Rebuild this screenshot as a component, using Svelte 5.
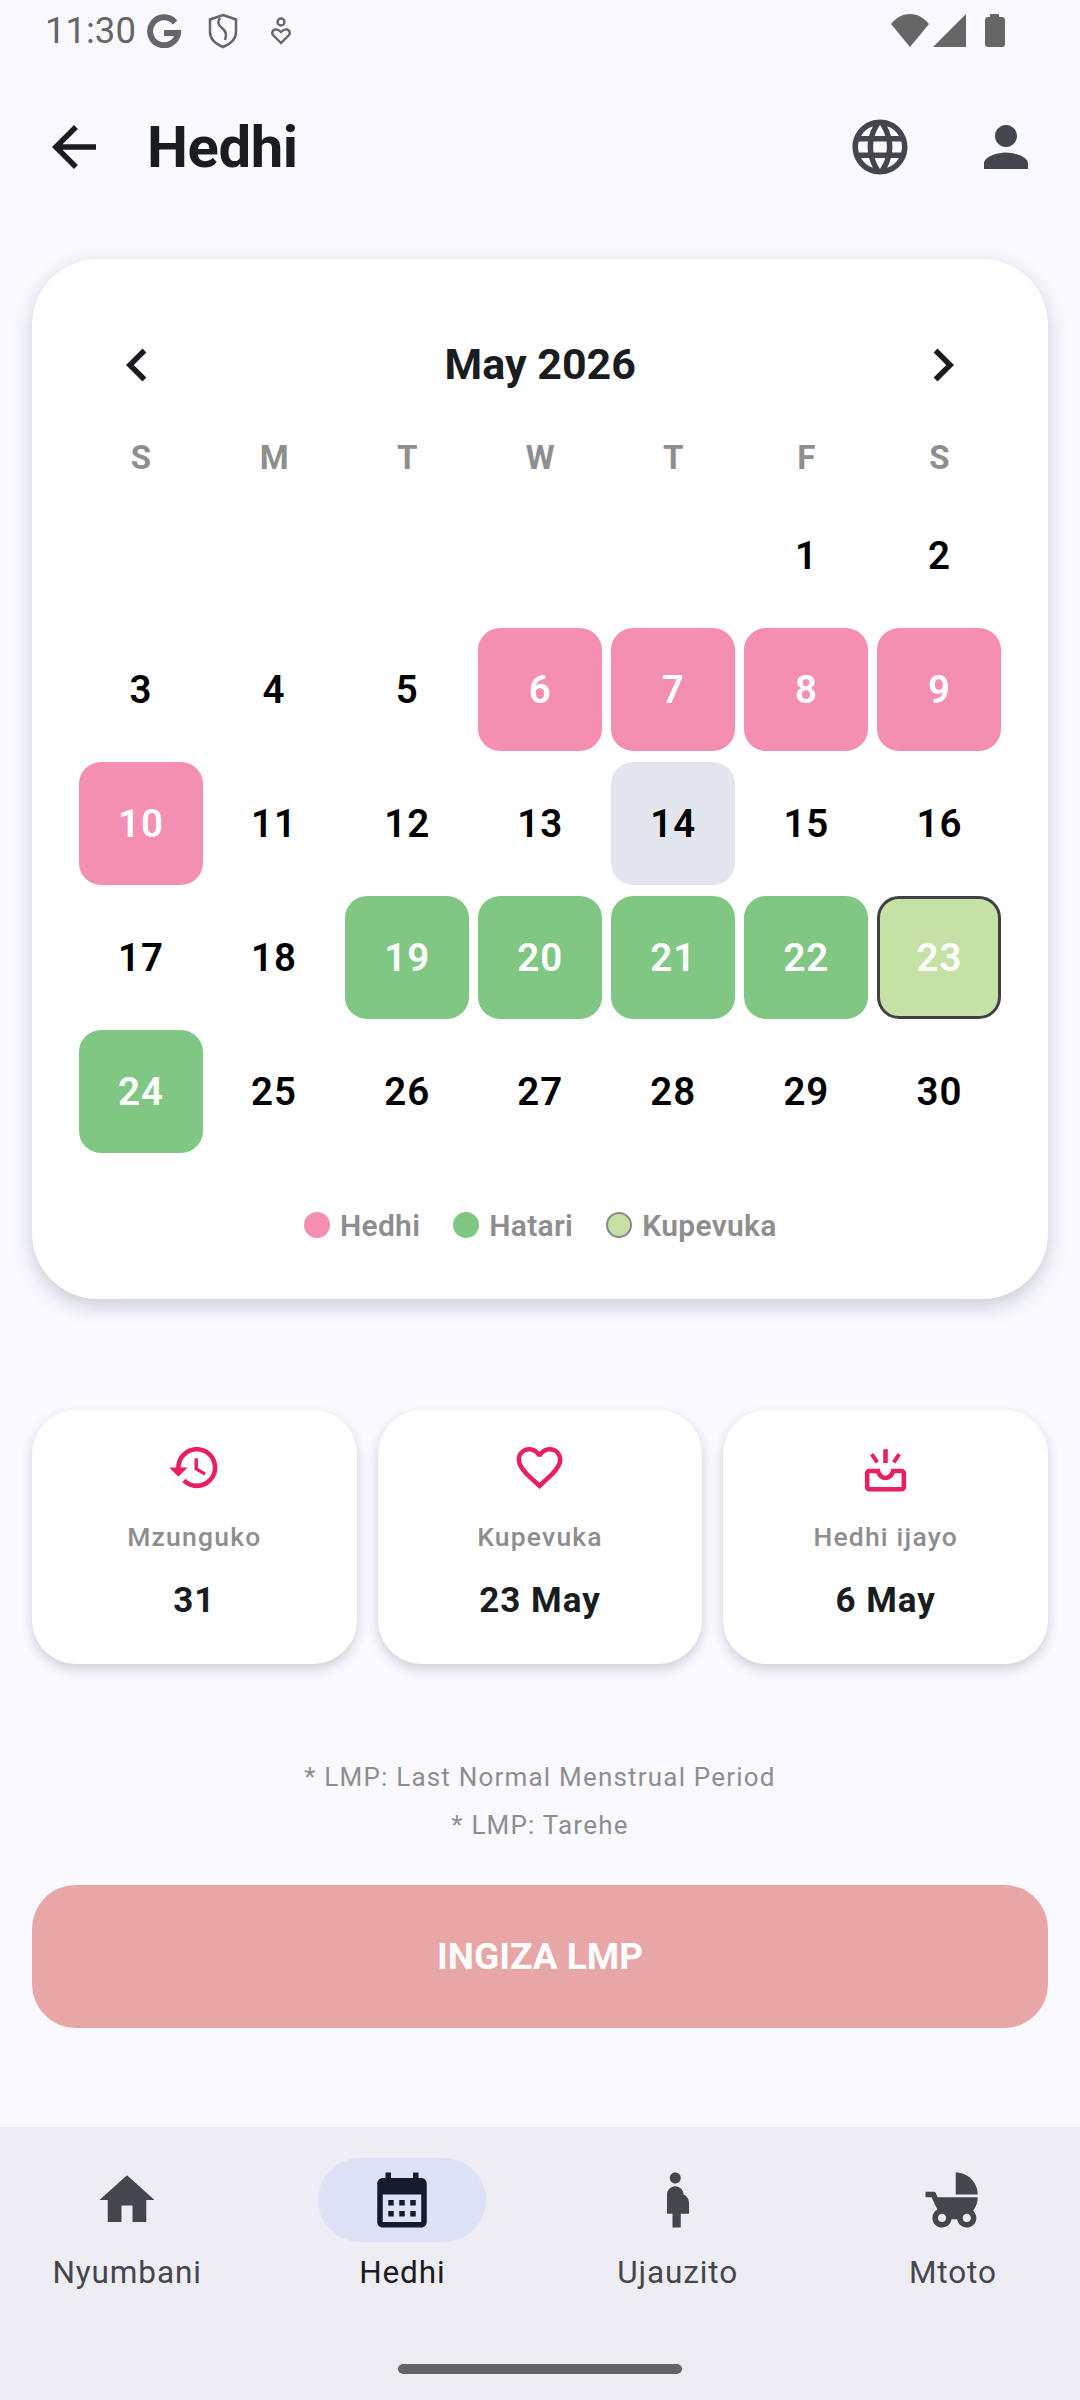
<script lang="ts">
  // May 2026 starts on a Friday
  const weekdays = ['S', 'M', 'T', 'W', 'T', 'F', 'S']
  const kinds: Record<number, string> = {
    6: 'period', 7: 'period', 8: 'period', 9: 'period', 10: 'period',
    14: 'today',
    19: 'fertile', 20: 'fertile', 21: 'fertile', 22: 'fertile', 24: 'fertile',
    23: 'ovulation'
  }
  const days = Array.from({ length: 30 }, (_, i) => i + 1)
  const blanks = Array.from({ length: 5 })

  const legend = [
    { label: 'Hedhi', kind: 'period' },
    { label: 'Hatari', kind: 'fertile' },
    { label: 'Kupevuka', kind: 'ovulation' }
  ]

  const stats = [
    {
      label: 'Mzunguko', value: '31', vb: '0 0 24 24',
      d: 'M13 3c-4.97 0-9 4.03-9 9H1l3.89 3.89.07.14L9 12H6c0-3.87 3.13-7 7-7s7 3.13 7 7-3.13 7-7 7c-1.93 0-3.68-.79-4.94-2.06l-1.42 1.42C8.27 19.99 10.51 21 13 21c4.97 0 9-4.03 9-9s-4.03-9-9-9zm-1 5v5l4.28 2.54.72-1.21-3.5-2.08V8H12z'
    },
    {
      label: 'Kupevuka', value: '23 May', vb: '0 0 24 24',
      d: 'M16.5 3c-1.74 0-3.41.81-4.5 2.09C10.91 3.81 9.24 3 7.5 3 4.42 3 2 5.42 2 8.5c0 3.78 3.4 6.86 8.55 11.54L12 21.35l1.45-1.32C18.6 15.36 22 12.28 22 8.5 22 5.42 19.58 3 16.5 3zm-4.4 15.55l-.1.1-.1-.1C7.14 14.24 4 11.39 4 8.5 4 6.5 5.5 5 7.5 5c1.54 0 3.04.99 3.57 2.36h1.87C13.46 5.99 14.96 5 16.5 5c2 0 3.5 1.5 3.5 3.5 0 2.89-3.14 5.74-7.9 10.05z'
    },
    {
      label: 'Hedhi ijayo', value: '6 May', vb: '0 -1.5 24 24',
      d: 'M18.7 5.2l-1.4-1-2.4 3.6 1.4 1zM13 2.5h-2v6h2zM7.7 8.8l1.4-1-2.4-3.6-1.4 1zM19 11h-4.6c0 1.5-1.1 3-2.4 3s-2.4-1.5-2.4-3H5c-1.1 0-2 .9-2 2v6c0 1.1.9 2 2 2h14c1.1 0 2-.9 2-2v-6c0-1.1-.9-2-2-2zm0 8H5v-6h3c.6 1.9 2.2 3 4 3s3.400-1.100 4-3h3z'
    }
  ]

  const tabs = [
    { label: 'Nyumbani', d: 'M10 20v-6h4v6h5v-8h3L12 3 2 12h3v8z' },
    {
      label: 'Hedhi', active: true,
      d: 'M19 4h-1V2h-2v2H8V2H6v2H5c-1.11 0-1.99.9-1.99 2L3 20c0 1.1.89 2 2 2h14c1.1 0 2-.9 2-2V6c0-1.1-.9-2-2-2zm0 16H5V10h14v10zM9 14H7v-2h2v2zm4 0h-2v-2h2v2zm4 0h-2v-2h2v2zm-8 4H7v-2h2v2zm4 0h-2v-2h2v2zm4 0h-2v-2h2v2z'
    },
    {
      label: 'Ujauzito',
      d: 'M9 4c0-1.11.89-2 2-2s2 .89 2 2-.89 2-2 2-2-.89-2-2zm7 9c-.01-1.34-.83-2.51-2-3 0-1.66-1.34-3-3-3s-3 1.34-3 3v7h2v5h3v-5h3v-4z'
    },
    {
      label: 'Mtoto',
      d: 'M13 2v8h8c0-4.420-3.580-8-8-8zm6.320 13.890C20.370 14.540 21 12.840 21 11H6.440l-.95-2H2v2h2.220s1.890 4.070 2.120 4.420c-1.100.59-1.840 1.750-1.840 3.080C4.500 20.430 6.070 22 8 22c1.760 0 3.220-1.300 3.460-3h2.080c.24 1.700 1.700 3 3.460 3 1.930 0 3.500-1.570 3.500-3.500 0-1.040-.46-1.970-1.180-2.610zM8 20c-.83 0-1.500-.67-1.500-1.500S7.170 17 8 17s1.500.67 1.500 1.500S8.830 20 8 20zm9 0c-.83 0-1.500-.67-1.500-1.500s.67-1.500 1.500-1.500 1.500.67 1.500 1.500-.67 1.500-1.500 1.500z'
    }
  ]
</script>

<div class="screen">
  <div class="status">
    <span class="time">11:30</span>
    <svg class="st-g" width="34" height="34" viewBox="0 0 34 34"><path d="M28 8.500A14 14 0 1 0 31 19H17" fill="none" stroke="#666" stroke-width="6"/></svg>
    <svg class="st-shield" width="30" height="36" viewBox="0 0 30 36" fill="none" stroke="#666" stroke-width="2.500"><path d="M15 2l13 4.500V19c0 7-5.500 12-13 15C7.500 31 2 26 2 19V6.500z"/><path d="M12 5c-3 4-2 7 2 10s5 7 3 12"/></svg>
    <svg class="st-care" width="20" height="28" viewBox="0 0 20 28" fill="none" stroke="#666" stroke-width="2.400"><circle cx="10" cy="5" r="3.500"/><path d="M10 26l-8-8c-1.500-2-.5-5 2-5.500 2.500-.5 4.500 1 6 2.500 1.500-1.500 3.500-3 6-2.500 2.500.5 3.500 3.500 2 5.500z"/></svg>
    <span class="status-gap"></span>
    <svg width="40" height="33" viewBox="0 0 40 33"><path d="M20 33L1 10C6 4 12 0 20 0s14 4 19 10z" fill="#666"/></svg>
    <svg class="st-signal" width="33" height="33" viewBox="0 0 33 33"><path d="M33 0v33H0z" fill="#666"/></svg>
    <svg class="st-batt" width="20" height="33" viewBox="0 0 20 33"><path d="M5 0h9v3h3c1.700 0 3 1.300 3 3v24c0 1.700-1.300 3-3 3H3c-1.700 0-3-1.300-3-3V6c0-1.700 1.300-3 3-3h2z" fill="#666"/></svg>
  </div>

  <div class="appbar">
    <svg class="ic back" viewBox="0 0 24 24"><path d="M20 11H7.830l5.590-5.590L12 4l-8 8 8 8 1.410-1.410L7.830 13H20v-2z"/></svg>
    <h1>Hedhi</h1>
    <svg class="ic action" viewBox="0 0 24 24"><path d="M11.990 2C6.470 2 2 6.480 2 12s4.470 10 9.990 10C17.520 22 22 17.520 22 12S17.520 2 11.990 2zm6.930 6h-2.950c-.32-1.250-.78-2.450-1.380-3.560 1.840.63 3.370 1.910 4.330 3.560zM12 4.040c.83 1.200 1.480 2.530 1.910 3.960h-3.820c.43-1.430 1.080-2.760 1.910-3.960zM4.260 14C4.100 13.360 4 12.690 4 12s.1-1.360.26-2h3.380c-.08.66-.14 1.320-.14 2 0 .68.06 1.340.14 2H4.260zm.82 2h2.950c.32 1.250.78 2.450 1.380 3.560-1.840-.63-3.370-1.900-4.330-3.560zm2.950-8H5.080c.96-1.660 2.490-2.930 4.330-3.560C8.810 5.550 8.350 6.750 8.030 8zM12 19.960c-.83-1.200-1.480-2.530-1.910-3.960h3.820c-.43 1.430-1.080 2.760-1.910 3.960zM14.340 14H9.660c-.09-.66-.16-1.320-.16-2 0-.68.07-1.350.16-2h4.680c.09.65.16 1.320.16 2 0 .68-.07 1.340-.16 2zm.25 5.560c.6-1.110 1.060-2.310 1.380-3.560h2.950c-.96 1.650-2.490 2.930-4.330 3.560zM16.360 14c.08-.66.14-1.320.14-2 0-.68-.06-1.340-.14-2h3.380c.16.64.26 1.310.26 2s-.1 1.360-.26 2h-3.380z"/></svg>
    <svg class="ic action person" viewBox="0 0 24 24"><path d="M12 12c2.210 0 4-1.790 4-4s-1.790-4-4-4-4 1.790-4 4 1.790 4 4 4zm0 2c-2.670 0-8 1.340-8 4v2h16v-2c0-2.660-5.330-4-8-4z"/></svg>
  </div>

  <main class="content">
    <section class="calendar">
      <div class="month">
        <svg class="ic chev" viewBox="0 0 24 24"><path d="M15.410 16.590L10.830 12l4.580-4.590L14 6l-6 6 6 6 1.410-1.410z"/></svg>
        <span class="month-name">May 2026</span>
        <svg class="ic chev" viewBox="0 0 24 24"><path d="M8.590 16.590L13.170 12 8.590 7.410 10 6l6 6-6 6-1.410-1.410z"/></svg>
      </div>
      <div class="grid weekdays">
        {#each weekdays as w}
          <span class="weekday">{w}</span>
        {/each}
      </div>
      <div class="grid days">
        {#each blanks as _}
          <span></span>
        {/each}
        {#each days as d}
          <span class="day {kinds[d] ?? ''}">{d}</span>
        {/each}
      </div>
      <div class="legend">
        {#each legend as l}
          <span class="legend-item">
            <span class="dot {l.kind}"></span>
            {l.label}
          </span>
        {/each}
      </div>
    </section>

    <section class="stats">
      {#each stats as s}
        <div class="stat">
          <svg class="stat-ic" viewBox={s.vb}><path d={s.d}/></svg>
          <span class="stat-label">{s.label}</span>
          <span class="stat-value">{s.value}</span>
        </div>
      {/each}
    </section>

    <div class="notes">
      <p>* LMP: Last Normal Menstrual Period</p>
      <p>* LMP: Tarehe</p>
    </div>

    <button class="cta">INGIZA LMP</button>
  </main>

  <nav class="nav">
    <div class="tabs">
      {#each tabs as t}
        <div class="tab" class:active={t.active}>
          <span class="pill">
            <svg class="ic" viewBox="0 0 24 24"><path d={t.d}/></svg>
          </span>
          <span class="tab-label">{t.label}</span>
        </div>
      {/each}
    </div>
    <div class="home-bar"></div>
  </nav>
</div>

<style>
:global(body) { margin: 0; background: #f9f9ff; }
.screen {
  width: 1080px; height: 2400px; display: flex; flex-direction: column; overflow: hidden;
  background: #f9f9ff; font-family: Roboto, "Liberation Sans", sans-serif; color: #191c20;
}
.status { height: 61px; display: flex; align-items: center; padding: 0 75px 0 45px; flex: 0 0 auto; }
.time { font-size: 36.500px; color: #666; line-height: 61px; }
.st-g { margin-left: 11px; }
.st-shield { margin-left: 27px; }
.st-care { margin-left: 33px; }
.status-gap { flex: 1; }
.st-signal { margin-left: 3px; }
.st-batt { margin-left: 19px; }

.ic { width: 66px; height: 66px; flex: 0 0 auto; fill: #44464f; }
.appbar { height: 172px; display: flex; align-items: center; padding: 0 41px; box-sizing: border-box; flex: 0 0 auto; }
.back { fill: #191c20; }
h1 { margin: 0 0 0 40px; font-size: 58px; font-weight: 700; line-height: 66px; flex: 1; letter-spacing: -0.4px; }
.person { margin-left: 60px; }

.content { padding: 26px 32px 0; display: flex; flex-direction: column; }
.calendar {
  background: #fff; border-radius: 66px; padding: 73px 46.500px 55px 47px;
  box-shadow: 0 7px 20px rgba(40, 40, 70, 0.22);
}
.month { display: flex; align-items: center; justify-content: space-between; padding: 0 25px; height: 66px; }
.chev { fill: #191c20; }
.month-name { font-size: 43px; font-weight: 700; padding-bottom: 2px; }
.grid { display: grid; grid-template-columns: repeat(7, 1fr); column-gap: 9px; }
.weekdays { margin-top: 40px; }
.weekday { text-align: center; font-size: 33px; font-weight: 700; line-height: 40px; color: #8e8e8e; }
.days { margin-top: 16px; grid-auto-rows: 123px; row-gap: 11px; }
.day {
  display: flex; align-items: center; justify-content: center; box-sizing: border-box;
  border-radius: 22px; font-size: 38.500px; font-weight: 600; color: #000; letter-spacing: 1px;
}
.day.period { background: #f48fb1; color: #fff; }
.day.fertile { background: #81c784; color: #fff; }
.day.ovulation { background: #c5e1a5; color: #fff; border: 3px solid #424242; }
.day.today { background: #e3e6ef; }

.legend { margin-top: 55px; display: flex; justify-content: center; gap: 33px; height: 34px; padding-bottom: 2px; }
.legend-item { display: flex; align-items: center; gap: 10px; font-size: 30px; font-weight: 600; color: #8e8e8e; letter-spacing: 0.3px; }
.dot { width: 26px; height: 26px; border-radius: 50%; box-sizing: border-box; }
.dot.period { background: #f48fb1; }
.dot.fertile { background: #81c784; }
.dot.ovulation { background: #c5e1a5; border: 2px solid #8a8a8a; }

.stats { margin-top: 111px; display: grid; grid-template-columns: repeat(3, 1fr); gap: 21px; }
.stat {
  background: #fff; border-radius: 44px; padding: 30px 0 41px;
  display: flex; flex-direction: column; align-items: center;
  box-shadow: 0 5px 12px rgba(40, 40, 70, 0.2);
}
.stat-ic { width: 55px; height: 55px; fill: #e91e63; }
.stat-label { margin-top: 24px; font-size: 26.500px; font-weight: 500; line-height: 36px; color: #8e8e8e; letter-spacing: 1.2px; }
.stat-value { margin-top: 24px; font-size: 35px; font-weight: 700; line-height: 44px; letter-spacing: 1px; }

.notes { margin-top: 89px; text-align: center; font-size: 26px; line-height: 48px; color: #8e8e8e; letter-spacing: 1.2px; }
.notes p { margin: 0; }

.cta {
  margin-top: 36px; height: 143px; border: 0; border-radius: 44px; background: #e8a6a6;
  color: #fff; font-family: inherit; font-size: 37px; font-weight: 700;
}

.nav { margin-top: auto; height: 273px; background: #eeedf3; flex: 0 0 auto; padding-top: 31px; box-sizing: border-box; }
.tabs { display: grid; grid-template-columns: repeat(4, 1fr); gap: 55px; padding: 0 17px; }
.tab { display: flex; flex-direction: column; align-items: center; }
.pill { width: 168px; height: 84px; border-radius: 42px; display: flex; align-items: center; justify-content: center; }
.tab.active .pill { background: #dde2f9; }
.tab.active .ic { fill: #141b2c; }
.tab-label { margin-top: 12px; font-size: 31.500px; font-weight: 450; line-height: 38px; color: #44464f; letter-spacing: 0.9px; }
.tab.active .tab-label { color: #191c20; }
.home-bar { width: 284px; height: 10px; border-radius: 5px; background: #636366; margin: 72px auto 0; }
</style>
